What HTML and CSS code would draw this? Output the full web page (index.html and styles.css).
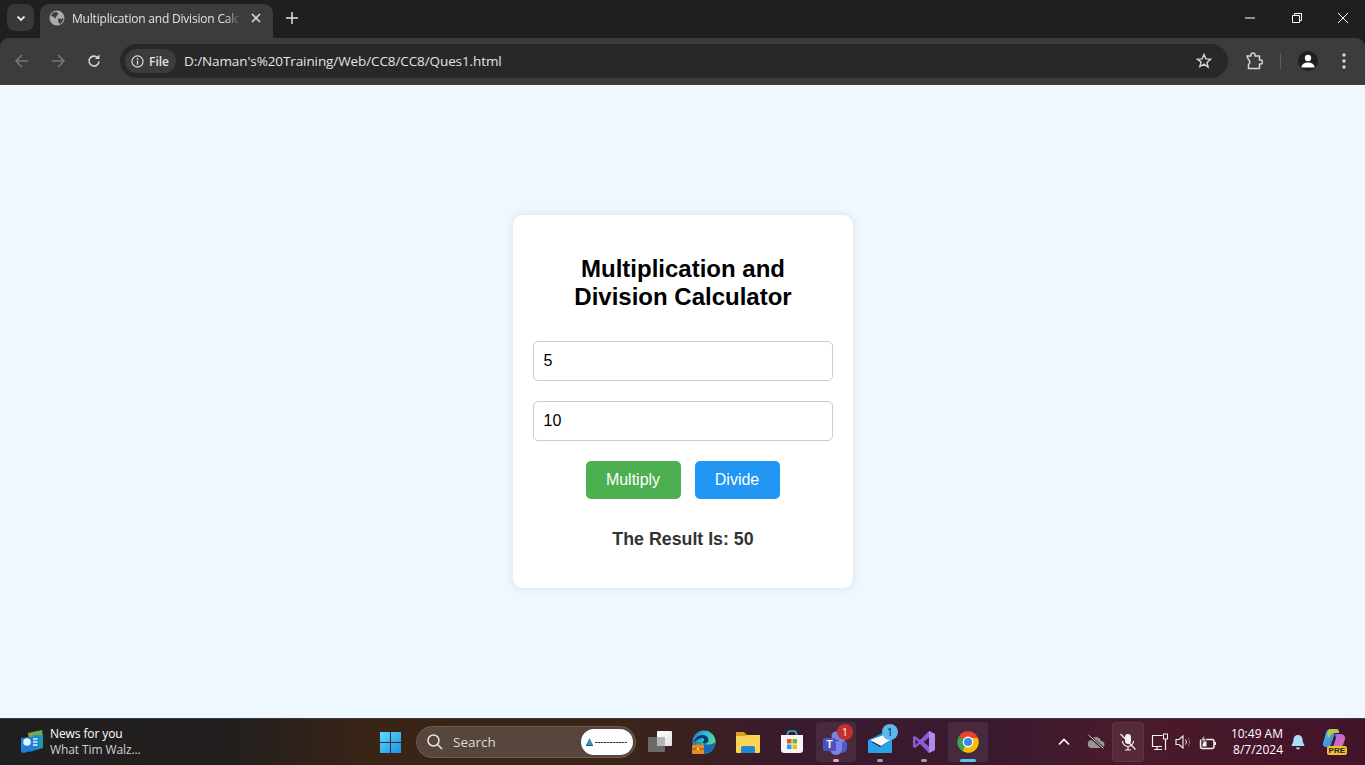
FILE: index.html
```html
<!DOCTYPE html>
<html lang="en">
<head>
  <meta charset="UTF-8">
  <title>Multiplication and Division Calculator</title>
  <link rel="stylesheet" href="styles.css">
</head>
<body>
  <!-- browser tabs -->
  <div class="tab-strip">
    <button class="tab-search">
      <svg width="12" height="12" viewBox="0 0 12 12"><path d="M2.500 4.500 6 8l3.500-3.500" fill="none" stroke="#e3e3e3" stroke-width="1.800"/></svg>
    </button>
    <div class="tab">
      <svg class="tab-globe" width="16" height="16" viewBox="0 0 16 16">
        <circle cx="8" cy="8" r="7.500" fill="#a8abae"/>
        <path d="M4 2.500 8 2l1.500 2-2 2-1 2.500-2.500-2L2 6ZM9 8.500l4 .5 1-1.500.5 2-3 4.500-2-1.500Z" fill="#3c3c3c"/>
      </svg>
      <span class="tab-title">Multiplication and Division Calc</span>
      <svg class="tab-close" width="10" height="10" viewBox="0 0 10 10"><path d="M1 1l8 8M9 1l-8 8" stroke="#e3e3e3" stroke-width="1.500"/></svg>
    </div>
    <svg class="new-tab" width="12" height="12" viewBox="0 0 12 12"><path d="M6 0v12M0 6h12" stroke="#e3e3e3" stroke-width="1.500"/></svg>
    <div class="window-controls">
      <svg width="10" height="10" viewBox="0 0 10 10"><path d="M0 5h10" stroke="#fff"/></svg>
      <svg width="10" height="10" viewBox="0 0 10 10"><path d="M.5 2.500h7v7h-7zM2.500 2.500V.5h7v7h-2" fill="none" stroke="#fff"/></svg>
      <svg width="10" height="10" viewBox="0 0 10 10"><path d="M0 0l10 10M10 0 0 10" stroke="#fff"/></svg>
    </div>
  </div>

  <!-- address bar -->
  <div class="toolbar">
    <div class="nav-btns">
      <svg width="16" height="16" viewBox="0 0 16 16"><path d="M14 8H2.500M8 2 2 8l6 6" fill="none" stroke="#777" stroke-width="1.500"/></svg>
      <svg width="16" height="16" viewBox="0 0 16 16"><path d="M2 8h11.500M8 2l6 6-6 6" fill="none" stroke="#777" stroke-width="1.500"/></svg>
      <svg width="16" height="16" viewBox="0 0 16 16"><path d="M13 8.500A5 5 0 1 1 11.500 4.500" fill="none" stroke="#d5d5d5" stroke-width="1.600"/><path d="M13.500 1.500v4.500H9z" fill="#d5d5d5"/></svg>
    </div>
    <div class="omnibox">
      <div class="file-chip">
        <svg width="13" height="13" viewBox="0 0 14 14"><circle cx="7" cy="7" r="6" fill="none" stroke="#e3e3e3" stroke-width="1.200"/><path d="M7 6v4.500" stroke="#e3e3e3" stroke-width="1.300"/><circle cx="7" cy="4" r=".9" fill="#e3e3e3"/></svg>
        <span>File</span>
      </div>
      <span class="url">D:/Naman's%20Training/Web/CC8/CC8/Ques1.html</span>
      <svg class="star" width="16" height="16" viewBox="0 0 16 16"><path d="M8 1.500l1.900 4.400 4.700.4-3.600 3.100 1.100 4.700L8 11.100l-4.100 2.500L5 8.900 1.400 6.300l4.700-.4z" fill="none" stroke="#d5d5d5" stroke-width="1.400"/></svg>
    </div>
    <div class="toolbar-right">
      <svg width="18" height="18" viewBox="0 0 18 18"><path d="M2 4h4V3a2 2 0 0 1 4 0v1h4.500v4h1a2 2 0 0 1 0 4h-1v4.500H3.500V12.500a3 3 0 0 0 0-5z" fill="none" stroke="#d5d5d5" stroke-width="1.500" stroke-linejoin="round"/></svg>
      <span class="toolbar-sep"></span>
      <div class="avatar">
        <svg width="14" height="14" viewBox="0 0 14 14"><circle cx="7" cy="4" r="3.200" fill="#fff"/><path d="M.5 13.500c0-3.500 3-5 6.500-5s6.500 1.500 6.500 5z" fill="#fff"/></svg>
      </div>
      <svg class="menu-dots" width="4" height="16" viewBox="0 0 4 16"><circle cx="2" cy="2" r="1.700" fill="#d5d5d5"/><circle cx="2" cy="8" r="1.700" fill="#d5d5d5"/><circle cx="2" cy="14" r="1.700" fill="#d5d5d5"/></svg>
    </div>
  </div>

  <!-- the page itself -->
  <main class="page">
    <div class="calc-card">
      <h2>Multiplication and Division Calculator</h2>
      <input class="num-input" type="text" value="5">
      <input class="num-input" type="text" value="10">
      <div class="btn-row">
        <button class="calc-btn multiply">Multiply</button>
        <button class="calc-btn divide">Divide</button>
      </div>
      <div class="result">The Result Is: 50</div>
    </div>
  </main>

  <!-- windows taskbar -->
  <footer class="taskbar">
    <div class="news">
      <svg width="24" height="24" viewBox="0 0 24 24">
        <path d="M9 3 23 0l1 8-14 1z" fill="#7da852"/>
        <path d="M14 5h10v13L10 22z" fill="#1e9aa5"/>
        <path d="M2 8l18-2v12L5 23q-3 0-3-3z" fill="#1f7fdc"/>
        <circle cx="8" cy="12" r="3.800" fill="#e8f6ff"/>
        <path d="M14 9h4.500M14 12h4.500M14 15h4.500" stroke="#e8f6ff" stroke-width="1.300"/>
      </svg>
      <div class="news-text">
        <div class="news-title">News for you</div>
        <div class="news-sub">What Tim Walz...</div>
      </div>
    </div>

    <div class="task-center">
      <div class="task-item win-item">
        <svg width="23" height="23" viewBox="0 0 24 24">
          <defs><linearGradient id="winblue" x1="0" y1="0" x2="1" y2="1"><stop offset="0" stop-color="#5fdcfb"/><stop offset="1" stop-color="#1b8fe8"/></linearGradient></defs>
          <path d="M1 1h10.500v10.500H1zM12.500 1H23v10.500H12.500zM1 12.500h10.500V23H1zM12.500 12.500H23V23H12.500z" fill="url(#winblue)"/>
        </svg>
      </div>
      <div class="task-search">
        <svg width="18" height="18" viewBox="0 0 18 18"><circle cx="7.500" cy="7.500" r="5.500" fill="none" stroke="#e6e6e6" stroke-width="1.500"/><path d="M11.500 11.500 16 16" stroke="#e6e6e6" stroke-width="1.600"/></svg>
        <span class="search-label">Search</span>
        <div class="search-badge">
          <svg width="44" height="10" viewBox="0 0 44 10">
            <path d="M4.500 1 8 8H1z" fill="#3d8cc4"/>
            <path d="M1 8.500h7" stroke="#1d4f82"/>
            <path d="M10 5.500h32" stroke="#334" stroke-width="1.200" stroke-dasharray="2 .5 3 .5"/>
          </svg>
        </div>
      </div>
      <div class="task-item">
        <svg width="24" height="24" viewBox="0 0 24 24">
          <defs><linearGradient id="tvg" x1="0" y1="0" x2="1" y2="1"><stop offset="0" stop-color="#fff"/><stop offset="1" stop-color="#e2e2e2"/></linearGradient></defs>
          <rect x="9" y="1" width="15" height="15" rx="1" fill="url(#tvg)"/>
          <rect x="0" y="7" width="17" height="15" rx="1" fill="#6a6a6a"/>
          <path d="M9 7h8v9H9z" fill="#b5b5b5"/>
        </svg>
      </div>
      <div class="task-item">
        <svg width="24" height="24" viewBox="0 0 24 24">
          <defs><linearGradient id="edgeg" x1="0" y1="0" x2="1" y2=".5"><stop offset="0" stop-color="#1b74c9"/><stop offset=".55" stop-color="#2ebfd3"/><stop offset="1" stop-color="#62d984"/></linearGradient></defs>
          <circle cx="12" cy="12" r="11.500" fill="url(#edgeg)"/>
          <path d="M23.500 12c0 6.500-5 11.500-11.500 11.500-2 0-3.500-.5-5-1.500l5-8c3 1 8 1 11.500-2z" fill="#1668b8"/>
          <path d="M11 8c-4 0-7 2-9 5 0-4 3-7 7.500-8 3-.5 6.500 1 7 4.500.3 2-1.500 4-4 4-1 0-2-.5-2-1.500 1-.5 1.500-1 1.500-2 0-1-.5-2-1-2z" fill="#0c3a6e"/>
          <rect x="0" y="15" width="12" height="9" rx="1" fill="#e88d1e"/>
          <path d="M3.500 15v-2h5v2" stroke="#8a5a1a" stroke-width="1.200" fill="none"/>
          <path d="M0 19h12" stroke="#8f4f0a"/>
          <rect x="5" y="18" width="2" height="2" fill="#ffd68a"/>
        </svg>
      </div>
      <div class="task-item">
        <svg width="24" height="24" viewBox="0 0 24 24">
          <path d="M0 3a1 1 0 0 1 1-1h7l3 3h12a1 1 0 0 1 1 1v3H0z" fill="#d9a021"/>
          <path d="M0 6h9l2-1h13v17a1 1 0 0 1-1 1H1a1 1 0 0 1-1-1z" fill="#fbd355"/>
          <path d="M7 16h10a2 2 0 0 1 2 2v5H5v-5a2 2 0 0 1 2-2z" fill="#1e88d2"/>
        </svg>
      </div>
      <div class="task-item">
        <svg width="24" height="24" viewBox="0 0 24 24">
          <path d="M7.500 6V4a3 3 0 0 1 3-3h3a3 3 0 0 1 3 3v2" fill="none" stroke="#35b5d8" stroke-width="1.600"/>
          <path d="M1 5h22v15a3 3 0 0 1-3 3H4a3 3 0 0 1-3-3z" fill="#f5f5f5"/>
          <rect x="7" y="9" width="4.500" height="4.500" fill="#e8502a"/>
          <rect x="12.500" y="9" width="4.500" height="4.500" fill="#70b82a"/>
          <rect x="7" y="14.500" width="4.500" height="4.500" fill="#2a9ee8"/>
          <rect x="12.500" y="14.500" width="4.500" height="4.500" fill="#f5b916"/>
        </svg>
      </div>
      <div class="task-item task-open">
        <svg class="teams-icon" width="26" height="24" viewBox="0 0 26 24">
          <circle cx="20" cy="8" r="3.500" fill="#7b83eb"/>
          <circle cx="14" cy="5" r="4.500" fill="#7b83eb"/>
          <path d="M15 11h10v6a5 5 0 0 1-5 5c-3 0-5-2-5-5z" fill="#5059c9"/>
          <path d="M8 10h12v8a6 6 0 0 1-12 0z" fill="#7b83eb"/>
          <rect x="1" y="7" width="13" height="13" rx="1.500" fill="#4b53bc"/>
          <text class="teams-t" x="7.500" y="17">T</text>
        </svg>
        <span class="task-badge red">1</span>
        <span class="task-dot pink"></span>
      </div>
      <div class="task-item">
        <svg width="24" height="24" viewBox="0 0 24 24">
          <path d="M0 10 18 1l6 4v7H0z" fill="#1682d4"/>
          <path d="M2 10 18 4l6 5-11 7z" fill="#f4f9fd"/>
          <path d="M0 10l12 7 12-8v13a1 1 0 0 1-1 1H1a1 1 0 0 1-1-1z" fill="#27a3ea"/>
        </svg>
        <span class="task-badge blue">1</span>
        <span class="task-dot"></span>
      </div>
      <div class="task-item">
        <svg width="24" height="24" viewBox="0 0 24 24">
          <path d="M17 1l6 3v16l-6 3-9-9-5 4-2-1V7l2-1 5 4z" fill="#8a5cd6"/>
          <path d="M17 1l6 3v16l-6 3z" fill="#b28ae8"/>
          <path d="M3.500 9v6L6.500 12zM17 7.500 11.500 12l5.500 4.500z" fill="#3a1a3e"/>
        </svg>
        <span class="task-dot"></span>
      </div>
      <div class="task-item task-open">
        <svg width="24" height="24" viewBox="0 0 24 24">
          <path d="M12 12 2.800 6.500A10.800 10.800 0 0 1 22 8H12z" fill="#ea4335"/>
          <path d="M12 12l-5.300 9.300A10.800 10.800 0 0 1 2.800 6.500z" fill="#34a853"/>
          <path d="M12 8h10A10.800 10.800 0 0 1 11 22.800L6.700 21.300z" fill="#fbbc05"/>
          <circle cx="12" cy="12" r="5.400" fill="#fff"/>
          <circle cx="12" cy="12" r="4.100" fill="#4285f4"/>
        </svg>
        <span class="task-dot wide"></span>
      </div>
    </div>

    <div class="tray">
      <div class="tray-item">
        <svg width="12" height="8" viewBox="0 0 12 8"><path d="M1 6.500l5-5 5 5" fill="none" stroke="#fff" stroke-width="1.600"/></svg>
      </div>
      <div class="tray-item">
        <svg width="18" height="16" viewBox="0 0 18 16"><path d="M5 14a4 4 0 0 1-.5-8 5 5 0 0 1 9.500 1 3.500 3.500 0 0 1 0 7z" fill="#9a9296"/><path d="M1 1l16 14" stroke="#2b1620" stroke-width="2.500"/><path d="M1.500 1l15 13.500" stroke="#ddd" stroke-width="1"/></svg>
      </div>
      <div class="tray-item mic-item">
        <svg width="18" height="18" viewBox="0 0 18 18"><rect x="6" y="1" width="6" height="10" rx="3" fill="#f2f2f2"/><path d="M3.500 8a5.500 5.500 0 0 0 11 0M9 13.500V17M6 17h6" fill="none" stroke="#f2f2f2" stroke-width="1.200"/><path d="M1.500 1 16.500 16.500" stroke="#f2f2f2" stroke-width="1.200"/></svg>
      </div>
      <div class="tray-item small">
        <svg width="18" height="18" viewBox="0 0 18 18"><path d="M11.500 2.500H1.500v11h9.500M6 13.500v3M3 16.500h8" fill="none" stroke="#f2f2f2" stroke-width="1.200"/><rect x="12.500" y="1" width="4" height="5" fill="none" stroke="#f2f2f2"/><path d="M14.500 6v11" stroke="#f2f2f2" stroke-width="1.200"/></svg>
      </div>
      <div class="tray-item small">
        <svg width="18" height="16" viewBox="0 0 18 16"><path d="M1 5.500h3L8 2v12l-4-3.500H1z" fill="none" stroke="#f2f2f2" stroke-width="1.100"/><path d="M10.500 5.500a4 4 0 0 1 0 5" fill="none" stroke="#f2f2f2"/><path d="M13 3.500a7 7 0 0 1 0 9" fill="none" stroke="#8a6a72"/></svg>
      </div>
      <div class="tray-item small">
        <svg width="18" height="15" viewBox="0 0 18 15"><rect x="1.500" y="4.500" width="13.500" height="9" rx="2" fill="none" stroke="#f2f2f2" stroke-width="1.500"/><rect x="3.500" y="6.500" width="4" height="5" fill="#f2f2f2"/><path d="M15.500 7v3h1.500V7z" fill="#f2f2f2"/><path d="M5.500 0 2 5h2.500L3 9l4.500-5H5z" fill="#f2f2f2" stroke="#3f1525" stroke-width=".6"/></svg>
      </div>
      <div class="clock">
        <div>10:49 AM</div>
        <div>8/7/2024</div>
      </div>
      <div class="tray-item small">
        <svg width="16" height="16" viewBox="0 0 16 16"><path d="M8 1a4.500 4.500 0 0 1 4.500 4.500c0 3.500 2 5 2 6.500h-13c0-1.500 2-3 2-6.500A4.500 4.500 0 0 1 8 1z" fill="#a8e0f8"/><path d="M6 13.500h4a2 2 0 0 1-4 0z" fill="#a8e0f8"/></svg>
      </div>
      <div class="copilot">
        <svg width="24" height="22" viewBox="0 0 24 22">
          <defs><linearGradient id="cop1" x1="0" y1="0" x2="1" y2="1"><stop offset="0" stop-color="#46c0e8"/><stop offset="1" stop-color="#3a7ee0"/></linearGradient><linearGradient id="cop2" x1="0" y1="0" x2="1" y2="1"><stop offset="0" stop-color="#9a6ae6"/><stop offset="1" stop-color="#f06aa8"/></linearGradient></defs>
          <path d="M8 1h6l-3 10-3 8H4a3 3 0 0 1-3-4l3-10a5 5 0 0 1 4-4z" fill="url(#cop1)"/>
          <path d="M13 6h6a4 4 0 0 1 4 5l-2 6a3 3 0 0 1-3 2h-7l3-9z" fill="url(#cop2)"/>
          <path d="M8 1h6a3 3 0 0 1 3 4h-5a3 3 0 0 0-3 2L7 10 5 8l1-4a3 3 0 0 1 2-3z" fill="#b8c84a"/>
        </svg>
        <span class="pre-tag">PRE</span>
      </div>
    </div>
  </footer>
</body>
</html>
```

FILE: styles.css
```css
* {
  box-sizing: border-box;
}

html, body {
  height: 100%;
}

body {
  margin: 0;
  height: 765px;
  overflow: hidden;
  display: flex;
  flex-direction: column;
  font-family: "Liberation Sans", Arial, sans-serif;
  background: #1f1f1f;
}

svg {
  display: block;
  flex-shrink: 0;
}

/* tab strip */
.tab-strip {
  height: 38px;
  flex-shrink: 0;
  display: flex;
  align-items: flex-end;
  padding-left: 7px;
  background: #1f1f1f;
}

.tab-search {
  width: 27px;
  height: 27px;
  margin-bottom: 7px;
  padding: 0;
  display: flex;
  align-items: center;
  justify-content: center;
  background: #383838;
  border: none;
  border-radius: 8px;
}

.tab {
  width: 233px;
  height: 34px;
  margin-left: 6px;
  padding: 0 12px 6px 9px;
  display: flex;
  align-items: center;
  background: #3c3c3c;
  border-radius: 9px 9px 0 0;
}

.tab-globe {
  margin-right: 7px;
}

.tab-title {
  width: 170px;
  white-space: nowrap;
  font-family: "Open Sans", sans-serif;
  font-size: 12px;
  letter-spacing: -0.2px;
  color: #e3e3e3;
  -webkit-mask-image: linear-gradient(90deg, #000 91%, transparent);
  mask-image: linear-gradient(90deg, #000 91%, transparent);
}

.tab-close {
  margin-left: 10px;
}

.new-tab {
  margin: 0 0 14px 13px;
}

.window-controls {
  margin-left: auto;
  width: 120px;
  height: 36px;
  margin-bottom: 2px;
  display: flex;
  align-items: center;
  justify-content: space-between;
  padding-right: 17px;
}

/* toolbar */
.toolbar {
  height: 47px;
  flex-shrink: 0;
  padding-bottom: 1px;
  display: flex;
  align-items: center;
  background: #3c3c3c;
  border-radius: 9px 9px 0 0;
}

.nav-btns {
  width: 120px;
  padding: 0 18px 0 14px;
  display: flex;
  justify-content: space-between;
}

.omnibox {
  width: 1108px;
  height: 34px;
  padding: 0 16px 0 5px;
  display: flex;
  align-items: center;
  background: #282828;
  border-radius: 17px;
}

.file-chip {
  width: 51px;
  height: 24px;
  padding-left: 6px;
  display: flex;
  align-items: center;
  gap: 5px;
  background: #3c3c3c;
  border-radius: 12px;
  font-family: "Open Sans", sans-serif;
  font-size: 12px;
  font-weight: 600;
  color: #e3e3e3;
}

.url {
  margin-left: 8px;
  font-family: "Open Sans", sans-serif;
  font-size: 13.5px;
  letter-spacing: -0.1px;
  color: #e3e3e3;
}

.star {
  margin-left: auto;
}

.toolbar-right {
  flex: 1;
  padding-left: 17px;
  display: flex;
  align-items: center;
}

.toolbar-sep {
  width: 1px;
  height: 16px;
  margin: 0 17px;
  background: #5e5e5e;
}

.avatar {
  width: 20px;
  height: 20px;
  display: flex;
  align-items: center;
  justify-content: center;
  background: #1f1f1f;
  border-radius: 50%;
  overflow: hidden;
}

.menu-dots {
  margin-left: 24px;
}

/* calculator page */
.page {
  flex: 1;
  display: flex;
  align-items: center;
  justify-content: center;
  background: #f0f8ff;
}

.calc-card {
  width: 340px;
  height: 373px;
  padding: 40px 20px 0;
  display: flex;
  flex-direction: column;
  align-items: center;
  background: #fff;
  border-radius: 10px;
  box-shadow: 0 0 10px rgba(0, 0, 0, 0.1);
}

.calc-card h2 {
  margin: 0 0 30px;
  padding-left: 1px;
  font-size: 24px;
  line-height: 28px;
  font-weight: bold;
  text-align: center;
  color: #000;
}

.num-input {
  width: 300px;
  height: 40px;
  margin-bottom: 20px;
  padding: 10px;
  font-family: "Liberation Sans", Arial, sans-serif;
  font-size: 16px;
  color: #000;
  background: #fff;
  border: 1px solid #ccc;
  border-radius: 5px;
}

.btn-row {
  display: flex;
  gap: 14px;
}

.calc-btn {
  height: 38px;
  padding: 0;
  font-family: "Liberation Sans", Arial, sans-serif;
  font-size: 16px;
  color: #fff;
  border: none;
  border-radius: 5px;
}

.multiply {
  width: 95px;
  background: #4caf50;
}

.divide {
  width: 85px;
  background: #2196f3;
}

.result {
  margin-top: 30px;
  padding-left: 1px;
  font-size: 17.8px;
  line-height: 21px;
  font-weight: bold;
  color: #333;
}

/* taskbar */
.taskbar {
  height: 47px;
  flex-shrink: 0;
  display: flex;
  align-items: center;
  background: linear-gradient(90deg, #201f20 0, #231f1e 230px, #3a2416 370px, #3b2518 620px, #3a1a2e 800px, #3b1a30 1000px, #4b1a2b 1130px, #42142a 1365px);
  border-top: 1px solid #3d3a3a;
  color: #fff;
}

.news {
  flex: 0 0 370px;
  padding-left: 19px;
  display: flex;
  align-items: center;
  gap: 7px;
}

.news-text {
  font-family: "Open Sans", sans-serif;
  font-size: 12px;
  line-height: 16px;
  letter-spacing: -0.1px;
}

.news-sub {
  color: #cfcfcf;
}

.task-center {
  display: flex;
  align-items: center;
  gap: 4px;
}

.task-item {
  position: relative;
  width: 40px;
  height: 40px;
  display: flex;
  align-items: center;
  justify-content: center;
  border-radius: 4px;
}

.win-item {
  width: 41px;
}

.task-open {
  background: rgba(255, 255, 255, 0.07);
}

.teams-icon {
  margin-left: -3px;
  margin-top: 2px;
}

.teams-t {
  font-family: "Liberation Sans", Arial, sans-serif;
  font-size: 10px;
  font-weight: bold;
  fill: #fff;
  text-anchor: middle;
}

.task-badge {
  position: absolute;
  top: 2px;
  right: 3px;
  width: 16px;
  height: 16px;
  border-radius: 50%;
  font-family: "Open Sans", sans-serif;
  font-size: 11px;
  line-height: 16px;
  text-align: center;
}

.task-badge.red {
  background: #c4302b;
  color: #fff;
}

.task-badge.blue {
  right: 2px;
  background: #5cb8e8;
  color: #123;
}

.task-dot {
  position: absolute;
  bottom: 0;
  left: 50%;
  width: 6px;
  height: 3px;
  margin-left: -3px;
  background: #a9a0a6;
  border-radius: 2px;
}

.task-dot.pink {
  background: #f2a0a8;
}

.task-dot.wide {
  width: 16px;
  margin-left: -8px;
  background: #5cc4f4;
}

.task-search {
  width: 220px;
  height: 32px;
  margin-left: 1px;
  padding: 0 2px 0 9px;
  display: flex;
  align-items: center;
  background: #56463c;
  border: 1px solid #6b5c52;
  border-radius: 16px;
}

.search-label {
  margin-left: 9px;
  font-family: "Open Sans", sans-serif;
  font-size: 13.5px;
  color: #dcdcdc;
}

.search-badge {
  width: 52px;
  height: 26px;
  margin-left: auto;
  display: flex;
  align-items: center;
  justify-content: center;
  background: #fff;
  border-radius: 13px;
}

.tray {
  margin-left: auto;
  padding-right: 15px;
  display: flex;
  align-items: center;
}

.tray-item {
  width: 32px;
  height: 40px;
  display: flex;
  align-items: center;
  justify-content: center;
  border-radius: 4px;
}

.tray-item.small {
  width: 24px;
}

.mic-item {
  margin-right: 4px;
  background: rgba(255, 255, 255, 0.07);
  box-shadow: inset 0 0 0 1px rgba(255, 255, 255, 0.06);
}

.clock {
  width: 66px;
  padding-right: 3px;
  text-align: right;
  font-family: "Open Sans", sans-serif;
  font-size: 12px;
  line-height: 16px;
}

.copilot {
  position: relative;
  width: 34px;
  height: 28px;
  margin-left: 6px;
  padding-left: 6px;
}

.pre-tag {
  position: absolute;
  right: 3px;
  bottom: 1px;
  padding: 0 2px;
  font-size: 8px;
  line-height: 9px;
  font-weight: bold;
  color: #222;
  background: #f0c030;
  border-radius: 2px;
}
```
